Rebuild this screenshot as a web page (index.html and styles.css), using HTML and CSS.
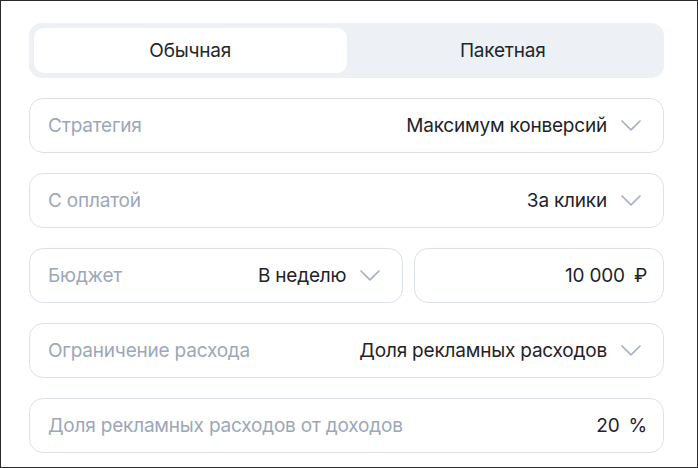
FILE: index.html
```html
<!DOCTYPE html>
<html lang="ru">
<head>
<meta charset="utf-8">
<link rel="stylesheet" href="styles.css">
</head>
<body>
<div class="frame">
  <div class="tabs">
    <div class="tab tab-active">Обычная</div>
    <div class="tab">Пакетная</div>
  </div>

  <div class="field select">
    <span class="label">Стратегия</span>
    <span class="value">Максимум конверсий</span>
    <svg class="chev" width="20" height="11" viewBox="0 0 20 11"><polyline points="1,1 10,9.8 19,1" fill="none" stroke="#a9b2c3" stroke-width="1.7" stroke-linecap="round" stroke-linejoin="round"/></svg>
  </div>

  <div class="field select">
    <span class="label">С оплатой</span>
    <span class="value">За клики</span>
    <svg class="chev" width="20" height="11" viewBox="0 0 20 11"><polyline points="1,1 10,9.8 19,1" fill="none" stroke="#a9b2c3" stroke-width="1.7" stroke-linecap="round" stroke-linejoin="round"/></svg>
  </div>

  <div class="row">
    <div class="field select">
      <span class="label">Бюджет</span>
      <span class="value">В неделю</span>
      <svg class="chev" width="20" height="11" viewBox="0 0 20 11"><polyline points="1,1 10,9.8 19,1" fill="none" stroke="#a9b2c3" stroke-width="1.7" stroke-linecap="round" stroke-linejoin="round"/></svg>
    </div>
    <div class="field number">
      <span class="value">10 000<span class="unit">₽</span></span>
    </div>
  </div>

  <div class="field select">
    <span class="label">Ограничение расхода</span>
    <span class="value">Доля рекламных расходов</span>
    <svg class="chev" width="20" height="11" viewBox="0 0 20 11"><polyline points="1,1 10,9.8 19,1" fill="none" stroke="#a9b2c3" stroke-width="1.7" stroke-linecap="round" stroke-linejoin="round"/></svg>
  </div>

  <div class="field number">
    <span class="label">Доля рекламных расходов от доходов</span>
    <span class="value">20<span class="unit">%</span></span>
  </div>
</div>
</body>
</html>
```

FILE: styles.css
```css
* { box-sizing: border-box; }
html, body { margin: 0; padding: 0; background: #fff; }
body {
  font-family: Inter, "Noto Sans", "Liberation Sans", sans-serif;
  font-size: 19px;
  letter-spacing: -0.2px;
  color: #1f2329;
}
.frame {
  width: 698px;
  height: 468px;
  border: 1px solid #2a2a2a;
  padding: 22px 33px 0 28px;
  display: flex;
  flex-direction: column;
  gap: 20px;
  overflow: hidden;
}
.tabs {
  height: 55px;
  background: #edf0f5;
  border-radius: 13px;
  padding: 5px;
  display: grid;
  grid-template-columns: 1fr 1fr;
}
.tab {
  display: flex;
  align-items: center;
  justify-content: center;
  border-radius: 10px;
  color: #22262c;
}
.tab-active {
  background: #fff;
}
.field {
  height: 55px;
  border: 1px solid #dce1e9;
  border-radius: 14px;
  display: flex;
  align-items: center;
  padding: 0 16px 0 18px;
}
.field.select { padding-right: 22px; }
.label {
  color: #9ca7b9;
  flex: 1;
  white-space: nowrap;
}
.value {
  margin-left: auto;
  white-space: nowrap;
  color: #1f2329;
}
.chev {
  margin-left: 14px;
  flex: none;
}
.unit {
  margin-left: 9px;
}
.row {
  display: grid;
  grid-template-columns: 3fr 2fr;
  gap: 11px;
}
```
